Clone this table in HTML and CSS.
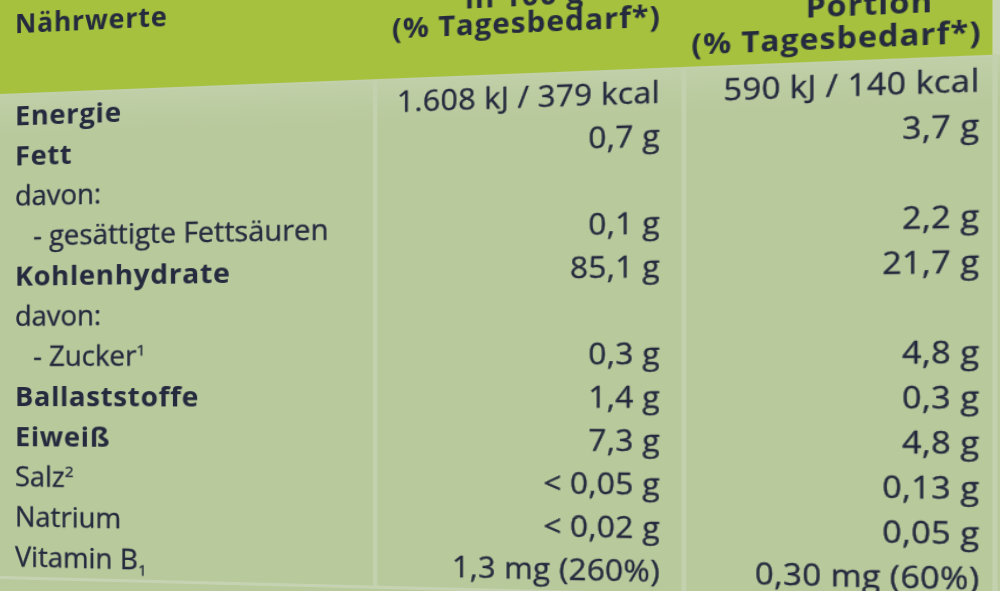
FILE: index.html
```html
<!DOCTYPE html>
<html lang="de">
<head>
<meta charset="utf-8">
<title>Nährwerte</title>
<link rel="stylesheet" href="styles.css">
</head>
<body>
<div class="sheet">
  <div class="head">
    <div class="h-name">Nährwerte</div>
    <div class="h-col h-col1"><span>in 100 g</span><span>(% Tagesbedarf*)</span></div>
    <div class="h-col h-col2"><span class="portion">Portion</span><span>(% Tagesbedarf*)</span></div>
    <div class="h-rest"></div>
  </div>
  <div class="rows">
    <div class="row"><div class="name bold">Energie</div><div class="val">1.608 kJ / 379 kcal</div><div class="val">590 kJ / 140 kcal</div></div>
    <div class="row"><div class="name bold">Fett</div><div class="val">0,7 g</div><div class="val">3,7 g</div></div>
    <div class="row"><div class="name">davon:</div><div class="val"></div><div class="val"></div></div>
    <div class="row"><div class="name sub">- gesättigte Fettsäuren</div><div class="val">0,1 g</div><div class="val">2,2 g</div></div>
    <div class="row"><div class="name bold">Kohlenhydrate</div><div class="val">85,1 g</div><div class="val">21,7 g</div></div>
    <div class="row"><div class="name">davon:</div><div class="val"></div><div class="val"></div></div>
    <div class="row"><div class="name sub">- Zucker<sup>1</sup></div><div class="val">0,3 g</div><div class="val">4,8 g</div></div>
    <div class="row"><div class="name bold">Ballaststoffe</div><div class="val">1,4 g</div><div class="val">0,3 g</div></div>
    <div class="row"><div class="name bold">Eiweiß</div><div class="val">7,3 g</div><div class="val">4,8 g</div></div>
    <div class="row"><div class="name">Salz<sup>2</sup></div><div class="val">&lt; 0,05 g</div><div class="val">0,13 g</div></div>
    <div class="row"><div class="name">Natrium</div><div class="val">&lt; 0,02 g</div><div class="val">0,05 g</div></div>
    <div class="row"><div class="name">Vitamin B<sub>1</sub></div><div class="val">1,3 mg (260%)</div><div class="val">0,30 mg (60%)</div></div>
  </div>
  <div class="foot">* Referenzmenge für einen durchschnittlichen Erwachsenen (8400 kJ / 2000 kcal)</div>
</div>
</body>
</html>
```

FILE: styles.css
```css
html, body {
  margin: 0;
  padding: 0;
  height: 100%;
  overflow: hidden;
  background: #b8c99c;
}

.sheet {
  width: 920px;
  transform-origin: 0 0;
  transform: matrix3d(1, -0.05228, 0, -0.0001352, 0, 1, 0, 0, 0, 0, 1, 0, 0, 0, 0, 1);
  font-family: "Open Sans", "DejaVu Sans", sans-serif;
  color: #252a3e;
}

.head {
  display: grid;
  grid-template-columns: 355px 269px 251px 1fr;
  height: 94px;
  background: #a5c13d;
  border-bottom: 2px solid #c2d0ab;
  font-weight: 700;
  font-size: 26px;
  line-height: 25px;
  letter-spacing: 0.8px;
}

.h-name {
  padding: 12px 0 0 15px;
}

.h-col {
  display: flex;
  flex-direction: column;
  align-items: center;
  padding-top: 9px;
}

.h-col2 {
  padding-top: 30px;
  line-height: 29px;
}

.portion {
  padding-left: 56px;
}

.h-rest {
  background: #c9d5b5;
}

.rows {
  display: flex;
  flex-direction: column;
  background: linear-gradient(to bottom, #c0cfa7 0, #b8c99c 40px);
}

.row {
  display: grid;
  grid-template-columns: 355px 269px 251px 1fr;
  height: 40px;
  font-size: 27px;
  line-height: 40px;
}

.row::after {
  content: "";
  border-left: 4px solid #c3d1ae;
}

.name {
  padding-left: 15px;
  white-space: nowrap;
  -webkit-text-stroke: 0.35px #252a3e;
}

.name.bold {
  font-weight: 700;
  letter-spacing: 0.6px;
  -webkit-text-stroke: 0;
}

.name.sub {
  padding-left: 33px;
}

.val {
  border-left: 4px solid #c3d1ae;
  text-align: right;
  padding-right: 18px;
  letter-spacing: 0.3px;
  white-space: nowrap;
  -webkit-text-stroke: 0.35px #252a3e;
}

.val:last-child {
  padding-right: 10px;
}

sup, sub {
  font-size: 15px;
  line-height: 0;
}

.foot {
  border-top: 3px solid #c6d3b2;
  padding: 4px 0 0 15px;
  font-size: 22px;
  line-height: 30px;
  white-space: nowrap;
}
```
